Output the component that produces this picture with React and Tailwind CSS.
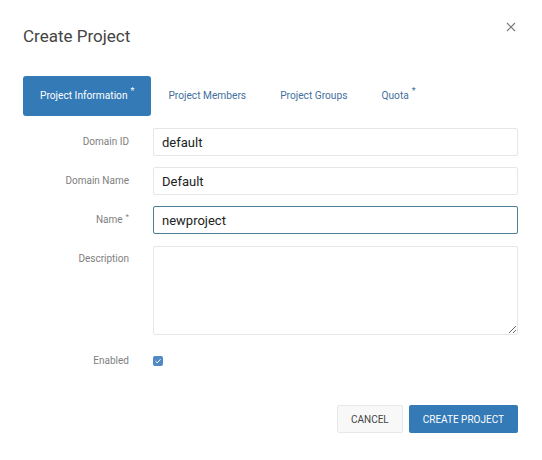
import React from "react";

const rowLabel = "text-right text-[10px] text-[#808080] leading-[28px]";
const inputCls =
  "h-[28px] w-full rounded-[2px] border border-[#e6e6e6] bg-white px-[8px] text-[13px] text-[#222] outline-none";

function Tab({ label, active, required }) {
  return (
    <div
      className={
        "flex h-[40px] items-center rounded-[3px] px-[17px] text-[10.2px] " +
        (active ? "bg-[#337ab7] text-white" : "text-[#43709d]")
      }
    >
      <span>{label}</span>
      {required && <span className="ml-[3px] -mt-[8px] text-[9px]">*</span>}
    </div>
  );
}

export default function App() {
  return (
    <div
      className="h-[460px] w-[542px] bg-white"
      style={{ fontFamily: "Roboto, 'Liberation Sans', sans-serif" }}
    >
      <div className="flex items-start justify-between pl-[23px] pr-[26px] pt-[25px]">
        <h1 className="text-[17px] leading-[22px] text-[#444]">Create Project</h1>
        <button className="mt-[-3px] text-[#666]" aria-label="Close">
          <svg width="10" height="10" viewBox="0 0 10 10">
            <path d="M1 1L9 9M9 1L1 9" stroke="#777" strokeWidth="1.1" />
          </svg>
        </button>
      </div>

      <div className="mt-[29px] flex pl-[23px]">
        <Tab label="Project Information" active required />
        <Tab label="Project Members" />
        <Tab label="Project Groups" />
        <Tab label="Quota" required />
      </div>

      <div className="mt-[12px] grid grid-cols-[106px_1fr] gap-x-[24px] gap-y-[11px] pl-[23px] pr-[24px]">
        <label className={rowLabel}>Domain ID</label>
        <input className={inputCls} defaultValue="default" readOnly />

        <label className={rowLabel}>Domain Name</label>
        <input className={inputCls} defaultValue="Default" readOnly />

        <label className={rowLabel}>
          Name<span className="relative -top-[4px] ml-[3px] text-[8px]">*</span>
        </label>
        <input
          className="h-[28px] w-full rounded-[2px] border border-[#4d7e93] bg-white px-[8px] text-[13px] text-[#222] outline-none"
          defaultValue="newproject"
        />

        <label className="pt-[3px] text-right text-[10px] leading-[20px] text-[#808080]">Description</label>
        <textarea className="h-[89px] w-full rounded-[2px] border border-[#e6e6e6] bg-white px-[8px] py-[4px] text-[13px] outline-none" />

        <label className="text-right text-[10px] leading-[30px] text-[#808080]">Enabled</label>
        <div className="flex h-[30px] items-center">
          <span className="flex h-[10px] w-[10px] items-center justify-center rounded-[2px] bg-[#5089c4]">
            <svg width="8" height="8" viewBox="0 0 8 8">
              <path d="M1.5 4.2L3.2 5.8L6.5 2.2" fill="none" stroke="white" strokeWidth="1" />
            </svg>
          </span>
        </div>
      </div>

      <div className="mt-[29px] flex justify-end gap-[6px] pr-[24px]">
        <button className="h-[28px] rounded-[2px] border border-[#e8e8e8] bg-[#f8f8f8] px-[13px] text-[10px] text-[#444]">
          CANCEL
        </button>
        <button className="h-[28px] rounded-[2px] bg-[#337ab7] px-[14px] text-[10px] text-white">
          CREATE PROJECT
        </button>
      </div>
    </div>
  );
}
